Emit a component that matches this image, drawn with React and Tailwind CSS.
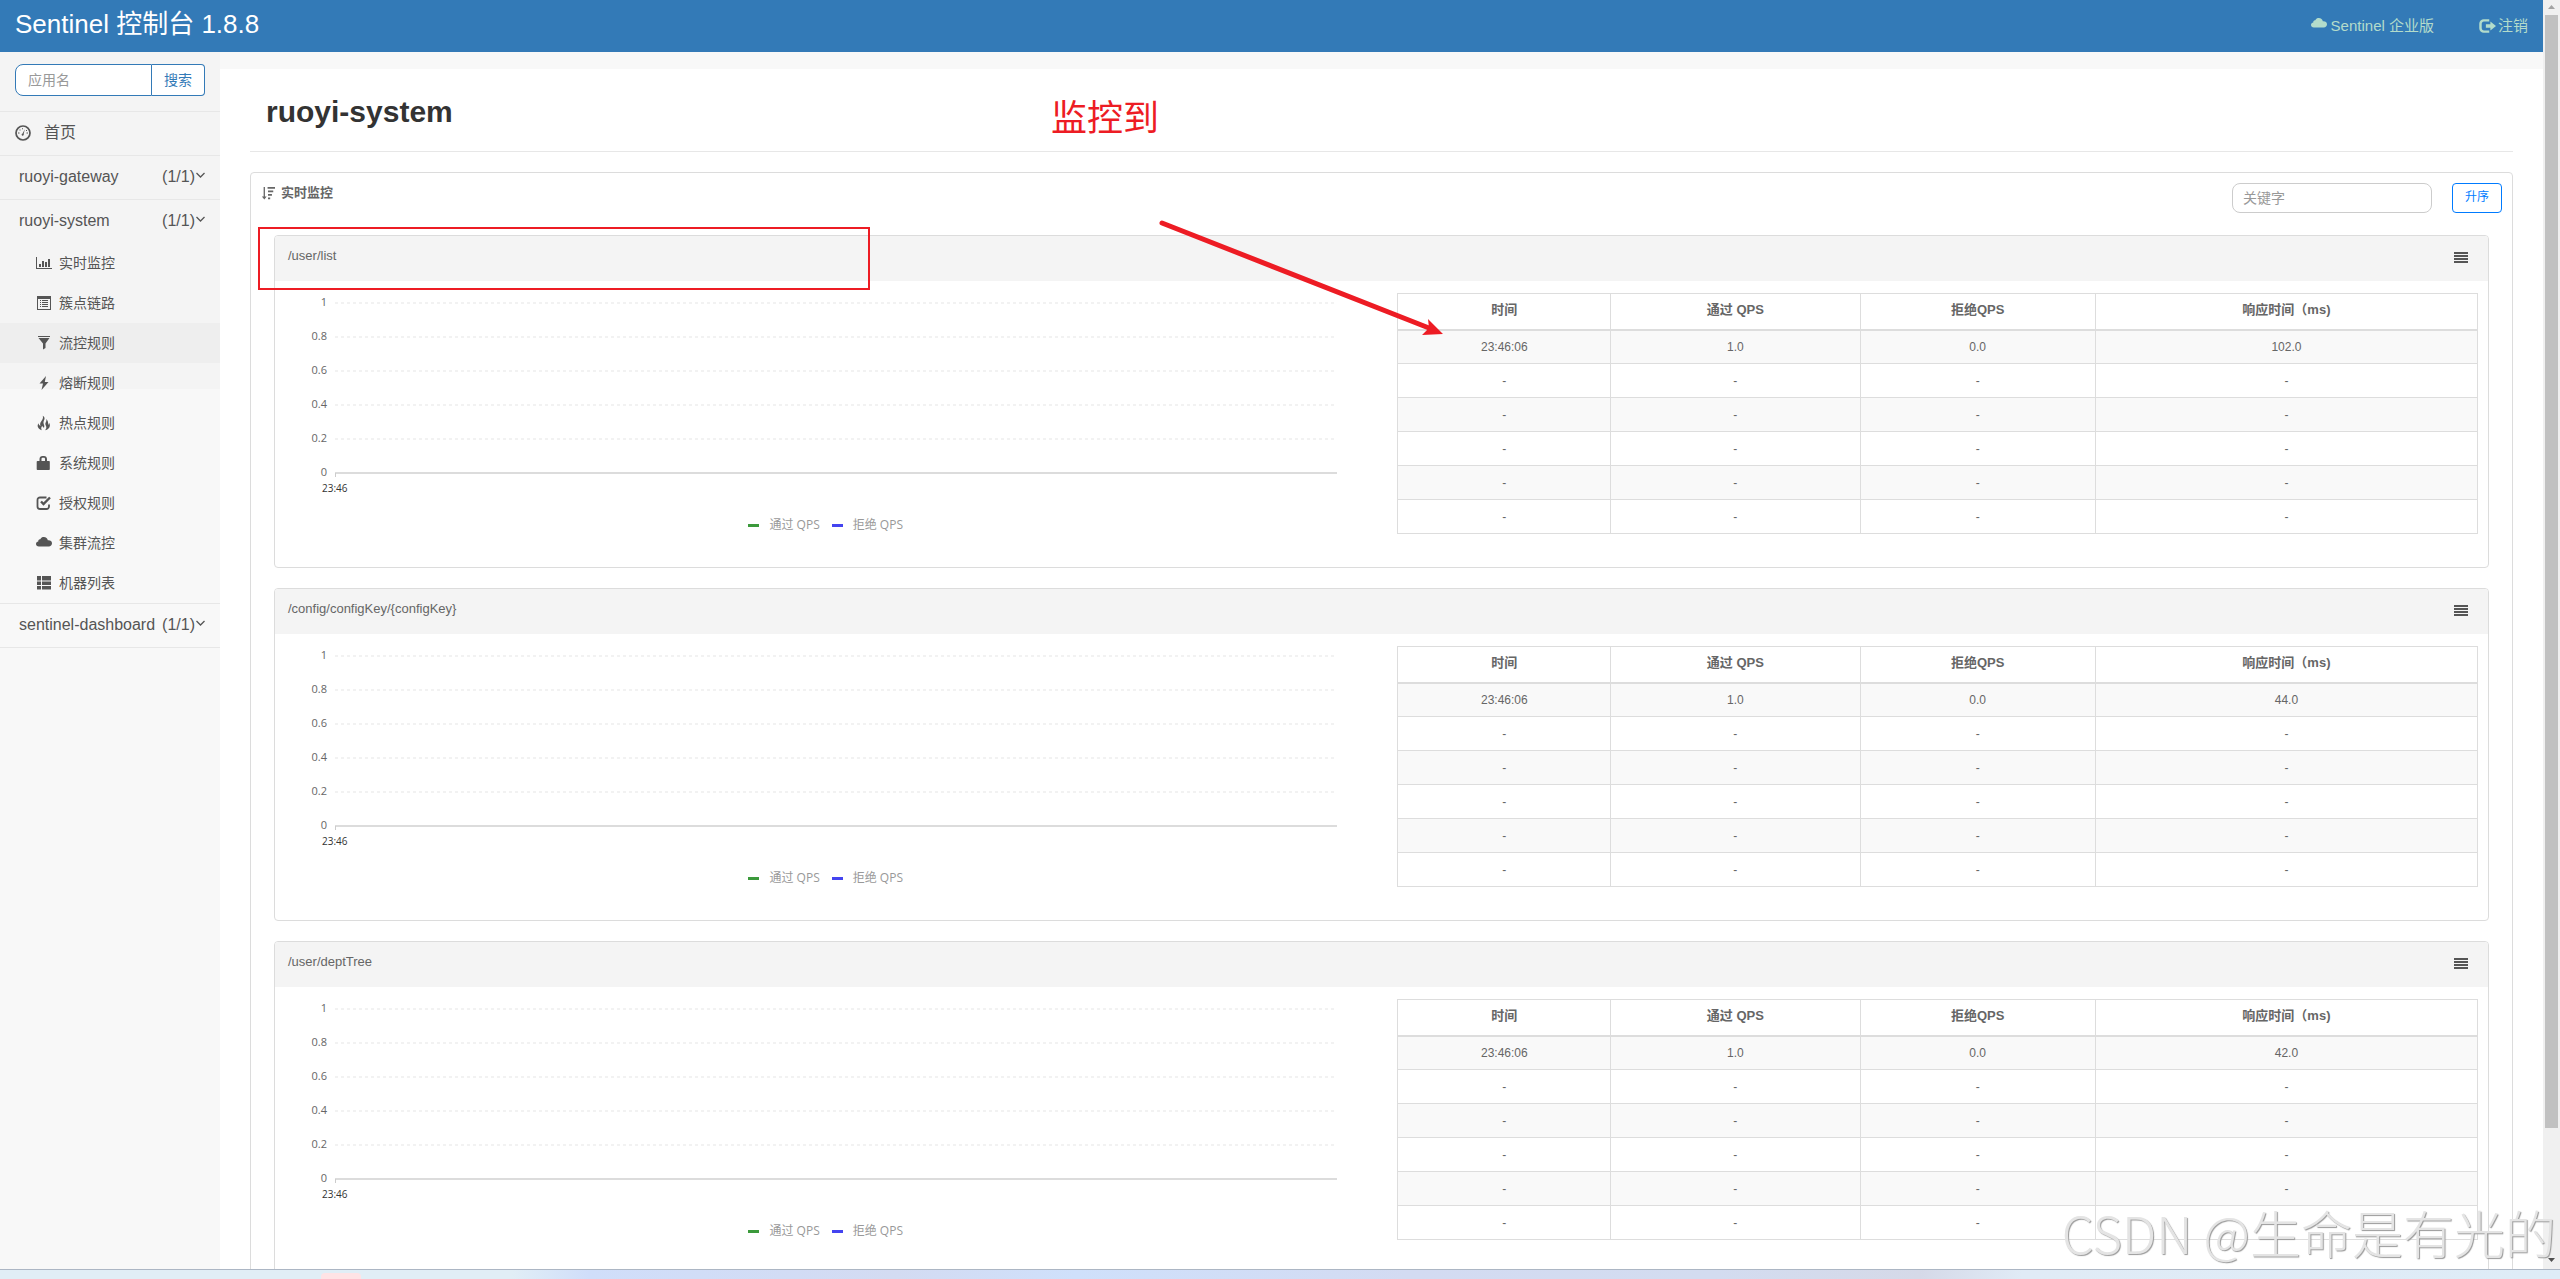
import React from "react";

const CHART_ICON = (
  <g>
    <path d="M0 2h1v11h15v1H0z" />
    <path d="M3 9h2v3H3zM6 6h2v6H6zM9 7h2v5H9zM12 4h2v8h-2z" />
  </g>
);
const LIST_ICON = (
  <path
    fillRule="evenodd"
    d="M1 1h14v14H1zM2 4v10h12V4zM4 5h1v1H4zM6 5h6v1H6zM4 7h1v1H4zM6 7h6v1H6zM4 9h1v1H4zM6 9h6v1H6zM4 11h1v1H4zM6 11h6v1H6z"
  />
);
const FILTER_ICON = <path d="M2 1h12v1H2zM2.500 3h11L9.500 8.500V13L7 14.500V8.500z" />;
const FLASH_ICON = <path d="M10 1 3.500 8.500H7L5.500 15 12.500 7H8.800z" />;
const FIRE_ICON = (
  <g>
    <path d="M6.800.8C7.400 3.200 6.500 4.600 5.300 6.200 4 7.900 3.800 9.500 4.600 11 3.300 10.600 2.600 9.700 2.600 8.300 1.600 9.600 1.400 11 2 12.300c.6 1.500 2 2.500 3.800 2.900C4.800 13.500 5.200 12 6.300 10.700c.2 1 .7 1.700 1.600 2.100.6-1.200.5-2.200-.1-3.600C6.900 7.200 8 5.500 8.400 4.500 8.900 3 8.200 1.500 6.800.8z" />
    <path d="M10.300 4c.3 1.500 0 2.400-.6 3.500-.7 1.300-.3 2.200.3 3.400.7 1.500.3 3-1 4.300 3-.4 4.800-2.300 4.900-4.700 0-1-.3-1.900-.9-2.700 0 1-.3 1.700-1 2.200.5-2.300-.1-4.600-1.700-6z" />
  </g>
);
const LOCK_ICON = (
  <path
    fillRule="evenodd"
    d="M3.500 6V4c0-2 1.300-3 3-3h1.500c1.700 0 3 1 3 3v2H13a.8.8 0 0 1 .8.8v7.400a.8.8 0 0 1-.8.800H1.500a.8.8 0 0 1-.8-.8V6.800A.8.8 0 0 1 1.500 6zM5.500 6h3.500V4c0-.8-.4-1.200-1.200-1.200h-1.100c-.8 0-1.200.4-1.200 1.200z"
  />
);
const CHECK_ICON = (
  <g fill="none" stroke="currentColor">
    <path strokeWidth="1.800" d="M10.500 2.500H4A2.500 2.500 0 0 0 1.500 5v6.500A2.500 2.500 0 0 0 4 14h6.500a2.500 2.500 0 0 0 2.500-2.500V9.500" />
    <path strokeWidth="2.400" d="M5 6.500 7.500 9 14 2.500" />
  </g>
);
const CLOUD_ICON = (
  <path d="M2.800 11.500C1.200 11.500 0 10.400 0 9c0-1.300 1-2.300 2.300-2.400C2 4.900 3 4 4.300 4.200 5 2.600 6.300 2 7.800 2c2.200 0 3.800 1.400 4 3.300 2.300-.4 4.200 1 4.200 3 0 1.900-1.400 3.200-3.200 3.200z" />
);
const TABLE_ICON = (
  <path d="M1 1h4v4.500H1zM6 1h9v4.500H6zM1 6.500h4V10H1zM6 6.500h9V10H6zM1 11h4v3.500H1zM6 11h9v3.500H6z" />
);
const LOGOUT_ICON = (
  <g>
    <path
      fill="none"
      stroke="currentColor"
      strokeWidth="2.200"
      d="M10 3H5.200A3 3 0 0 0 2.200 6v4a3 3 0 0 0 3 3H10"
    />
    <path d="M11 4 16 8 11 12V9.600H7V6.400H11z" />
  </g>
);
const HOME_ICON = (
  <g>
    <circle cx="8" cy="8" r="7" fill="none" stroke="currentColor" strokeWidth="1.700" />
    <path d="M9.800 4.200 8.700 9a1.100 1.100 0 1 1-1.100-.6zM3 7.500h1.500v1H3zM11.500 7.500H13v1h-1.500zM4.500 4.500h1v1h-1zM7 3.200h1v1H7zM11 5h1v1h-1z" />
  </g>
);
const SORT_ICON = (
  <path d="M3 1h1.500v11h2l-2.700 3.500L1 12h2zM7.500 1H16v2H7.500zM8 5h6v2H8zM8 9h4.500v2H8zM8 13h2.500v2H8z" />
);

function Icon({ className, children }) {
  return (
    <svg viewBox="0 0 16 16" fill="currentColor" className={className} aria-hidden="true">
      {children}
    </svg>
  );
}

const SUBMENU = [
  { label: "实时监控", icon: CHART_ICON },
  { label: "簇点链路", icon: LIST_ICON },
  { label: "流控规则", icon: FILTER_ICON, active: true },
  { label: "熔断规则", icon: FLASH_ICON },
  { label: "热点规则", icon: FIRE_ICON },
  { label: "系统规则", icon: LOCK_ICON },
  { label: "授权规则", icon: CHECK_ICON },
  { label: "集群流控", icon: CLOUD_ICON },
  { label: "机器列表", icon: TABLE_ICON },
];

const RESOURCES = [
  { name: "/user/list", rt: "102.0" },
  { name: "/config/configKey/{configKey}", rt: "44.0" },
  { name: "/user/deptTree", rt: "42.0" },
];

const TICKS = ["1", "0.8", "0.6", "0.4", "0.2", "0"];

function Header() {
  return (
    <header className="flex h-[52px] shrink-0 items-center justify-between bg-[#337ab7] px-[15px]">
      <a href="#" className="pb-1 text-[26px] leading-8 text-white">
        Sentinel 控制台 1.8.8
      </a>
      <nav className="flex gap-11 text-[15px] leading-5 text-[#b3dccb]">
        <a href="#enterprise" className="flex items-center gap-1">
          <Icon className="mb-1 size-4">{CLOUD_ICON}</Icon>
          Sentinel 企业版
        </a>
        <a href="#logout" className="flex items-center gap-0.5">
          <Icon className="size-[18px]">{LOGOUT_ICON}</Icon>
          注销
        </a>
      </nav>
    </header>
  );
}

function AppRow({ name }) {
  return (
    <button type="button" className="flex h-[43px] w-full items-center pr-3.5 pb-0.5 pl-[19px]">
      <span>{name}</span>
      <span className="ml-auto">(1/1)</span>
      <svg viewBox="0 0 11 8" className="mb-1 h-2 w-[11px]" aria-hidden="true">
        <path d="M1.500 2 5.500 6 9.500 2" fill="none" stroke="currentColor" strokeWidth="1.300" />
      </svg>
    </button>
  );
}

function Sidebar() {
  return (
    <aside className="w-[220px] shrink-0 bg-[linear-gradient(#f4f4f4_337px,#f8f8f8_337px)] text-base text-[#555]">
      <form className="flex h-[59px] items-start px-[15px] pt-3">
        <input
          type="text"
          aria-label="应用名"
          placeholder="应用名"
          className="h-8 w-[137px] rounded-l-lg border border-[#337ab7] bg-white px-3 text-sm placeholder:text-[#999]"
        />
        <button
          type="button"
          className="h-8 flex-1 rounded-r border border-l-0 border-[#337ab7] bg-white text-sm text-[#337ab7]"
        >
          搜索
        </button>
      </form>
      <ul>
        <li className="border-t border-[#e7e7e7]">
          <a href="#home" className="flex h-[43px] items-center gap-[13px] pb-0.5 pl-[15px]">
            <Icon className="size-4">{HOME_ICON}</Icon>
            首页
          </a>
        </li>
        <li className="border-t border-[#e7e7e7]">
          <AppRow name="ruoyi-gateway" />
        </li>
        <li className="border-t border-[#e7e7e7]">
          <AppRow name="ruoyi-system" />
          <ul className="text-sm">
            {SUBMENU.map((m) => (
              <li key={m.label} className={m.active ? "bg-[#eee]" : ""}>
                <a href={"#" + m.label} className="flex h-10 items-center gap-[7px] pb-px pl-9">
                  <Icon className="size-4">{m.icon}</Icon>
                  {m.label}
                </a>
              </li>
            ))}
          </ul>
        </li>
        <li className="border-y border-[#e7e7e7]">
          <AppRow name="sentinel-dashboard" />
        </li>
      </ul>
    </aside>
  );
}

function Chart() {
  return (
    <div className="pt-1 font-['Open_Sans','Noto_Sans_CJK_SC',sans-serif] text-[12px]">
      <div className="flex">
        <div className="w-[41px] text-right text-[11px] text-[#666]">
          {TICKS.map((t) => (
            <div key={t} className="h-[34px] leading-[34px]">
              {t}
            </div>
          ))}
        </div>
        <svg className="mr-[60px] ml-2 h-[204px] flex-1" aria-hidden="true">
          {TICKS.slice(0, 5).map((t, i) => (
            <line
              key={t}
              x1="0"
              x2="100%"
              y1={18 + i * 34}
              y2={18 + i * 34}
              stroke="#f2f2f2"
              strokeWidth="2"
              strokeDasharray="3 3"
            />
          ))}
          <line x1="0" x2="100%" y1="188" y2="188" stroke="#dcdcdc" strokeWidth="2" />
          <line x1="0.5" x2="0.5" y1="188" y2="192" stroke="#ccc" />
        </svg>
      </div>
      <div className="-mt-2 pl-9 text-[10px] leading-[14px] text-[#333]">23:46</div>
      <div className="mt-5 flex justify-center gap-3 pr-8 leading-5 text-[#999]">
        <span className="flex items-center gap-2.5">
          <i className="h-[3px] w-[11px] bg-[#3c9a3c]" />
          通过 QPS
        </span>
        <span className="flex items-center gap-2.5">
          <i className="h-[3px] w-[11px] bg-[#4444f0]" />
          拒绝 QPS
        </span>
      </div>
    </div>
  );
}

function MetricTable({ rt }) {
  const rows = [["23:46:06", "1.0", "0.0", rt], ...Array(5).fill(["-", "-", "-", "-"])];
  return (
    <table className="mt-3 w-full table-fixed border-collapse self-start border border-[#ddd] text-center text-[12px] leading-4 text-[#666]">
      <colgroup>
        <col className="w-[19.7%]" />
        <col className="w-[23.1%]" />
        <col className="w-[21.8%]" />
        <col className="w-[35.4%]" />
      </colgroup>
      <thead>
        <tr className="text-[13px]">
          {["时间", "通过 QPS", "拒绝QPS", "响应时间（ms)"].map((h) => (
            <th key={h} scope="col" className="h-9 border border-b-2 border-[#ddd] p-0 pb-0.5 font-bold">
              {h}
            </th>
          ))}
        </tr>
      </thead>
      <tbody>
        {rows.map((r, i) => (
          <tr key={i} className="odd:bg-[#f9f9f9]">
            {r.map((c, j) => (
              <td key={j} className="h-[34px] border border-[#ddd] p-0">
                {c}
              </td>
            ))}
          </tr>
        ))}
      </tbody>
    </table>
  );
}

function ResourceCard({ name, rt }) {
  return (
    <section className="overflow-hidden rounded border border-[#dcdcdc]">
      <div className="flex h-[45px] items-center justify-between bg-[#f4f4f4] pr-5 pb-0.5 pl-[13px] text-[#666]">
        <h3 className="pb-1 text-[13px] leading-5">{name}</h3>
        <button type="button" aria-label="菜单">
          <svg viewBox="0 0 14 12" className="h-3 w-3.5" fill="#555" aria-hidden="true">
            <path d="M0 0h14v2H0zM0 3h14v2H0zM0 6h14v2H0zM0 9h14v2H0z" />
          </svg>
        </button>
      </div>
      <div className="grid grid-cols-[1112fr_1081fr] pr-2.5 pb-8 pl-[11px]">
        <Chart />
        <MetricTable rt={rt} />
      </div>
    </section>
  );
}

function Main() {
  return (
    <main className="min-w-0 flex-1 border-t-[17px] border-[#f8f8f8] px-[30px]">
      <div className="flex h-[83px] items-center border-b border-[#e7e7e7] pt-0.5 pl-4">
        <h1 className="text-[30px] font-bold text-[#333]">ruoyi-system</h1>
      </div>
      <div className="mt-5 rounded border border-[#dcdcdc]">
        <div className="flex h-[62px] items-start px-2.5 pt-2.5">
          <h2 className="flex items-center gap-1.5 text-[13px] leading-5 font-bold text-[#666]">
            <Icon className="size-3.5">{SORT_ICON}</Icon>
            实时监控
          </h2>
          <input
            type="text"
            aria-label="关键字"
            placeholder="关键字"
            className="ml-auto h-[30px] w-[200px] rounded-lg border border-[#ccc] bg-white px-2.5 text-sm placeholder:text-[#999]"
          />
          <button
            type="button"
            className="ml-5 h-[30px] w-[50px] rounded border border-[#007bff] bg-white pb-0.5 text-[12px] text-[#007bff]"
          >
            升序
          </button>
        </div>
        <div className="flex flex-col gap-5 px-[23px] pb-5">
          {RESOURCES.map((r) => (
            <ResourceCard key={r.name} {...r} />
          ))}
        </div>
      </div>
    </main>
  );
}

function Scrollbar() {
  return (
    <div className="flex w-[17px] shrink-0 flex-col items-center bg-[#f0f0f0]" aria-hidden="true">
      <svg viewBox="0 0 17 15" className="h-[15px] w-[17px]">
        <path d="M5 9h7L8.500 5z" fill="#a3a3a3" />
      </svg>
      <div className="h-[87.7%] w-[13px] bg-[#c1c1c1]" />
      <svg viewBox="0 0 17 15" className="mt-auto h-[15px] w-[17px]">
        <path d="M5 4h7L8.500 8z" fill="#505050" />
      </svg>
    </div>
  );
}

function Annotations() {
  return (
    <div className="pointer-events-none">
      <div className="absolute top-[227px] left-[258px] h-[63px] w-[612px] border-2 border-[#ed1c24]" />
      <div className="absolute top-[97px] left-[1051px] text-[36px] leading-[44px] text-[#ed1c24]">监控到</div>
      <svg viewBox="0 0 290 120" className="absolute top-[218px] left-[1156px] h-[120px] w-[290px]">
        <path d="M6 5 273 110" stroke="#ed1c24" strokeWidth="5" strokeLinecap="round" />
        <path d="M287 116 272 101 273 110 266 117z" fill="#ed1c24" />
      </svg>
      <div className="absolute right-1 bottom-3 font-['Noto_Sans_CJK_SC',sans-serif] text-[51px] leading-[70px] font-light whitespace-nowrap text-[#e4e4e4] [text-shadow:1px_1px_1px_#999]">
        CSDN @生命是有光的
      </div>
    </div>
  );
}

export default function App() {
  return (
    <div className="relative flex h-screen flex-col overflow-hidden bg-white font-['Liberation_Sans','Noto_Sans_CJK_SC',sans-serif]">
      <div className="flex min-h-0 flex-1">
        <div className="flex min-w-0 flex-1 flex-col overflow-hidden">
          <Header />
          <div className="flex flex-1">
            <Sidebar />
            <Main />
          </div>
        </div>
        <Scrollbar />
      </div>
      <div className="flex h-2.5 shrink-0 items-end border-t border-[#acb6c4] bg-[linear-gradient(90deg,#e1eef6_0%,#e1eef6_20%,#d0defa_23%,#d3dbf2_35%,#cfe0fb_42%,#d3dbf2_55%,#d3dcf0_67%,#d5d9e8_75%,#e0ebf6_79%,#deecf7_100%)] pl-[321px]">
        <div className="h-1.5 w-10 rounded-t bg-[#ffe3e5]" />
      </div>
      <Annotations />
    </div>
  );
}
